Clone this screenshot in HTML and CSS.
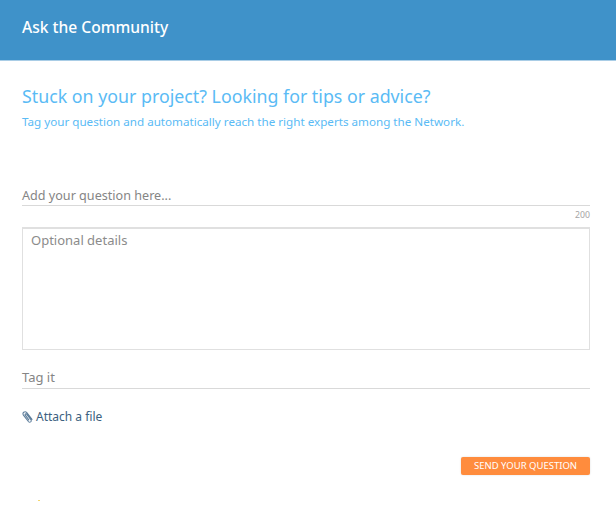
FILE: index.html
```html
<!DOCTYPE html>
<html lang="en">
<head>
<meta charset="utf-8">
<title>Ask the Community</title>
<link rel="stylesheet" href="styles.css">
</head>
<body>
<header class="header"><h1 class="header-title">Ask the Community</h1></header>
<main class="content">
  <h2 class="headline">Stuck on your project? Looking for tips or advice?</h2>
  <p class="subline">Tag your question and automatically reach the right experts among the Network.</p>
  <div class="field question">Add your question here...</div>
  <div class="counter">200</div>
  <div class="details">Optional details</div>
  <div class="field tags">Tag it</div>
  <a class="attach" href="#">
    <svg class="clip" width="11" height="12" viewBox="0 0 11 12" fill="none" stroke="#5f7f9c" stroke-width="1.1" stroke-linecap="round">
      <path d="M10 8.4 4.8 1.6C4 .7 2.7.5 1.7 1.3.8 2 .7 3.2 1.4 4.1l5 6.4c.6.7 1.5.9 2.2.4.7-.6.8-1.5.3-2.2L4.6 3.2c-.3-.4-.8-.5-1.2-.2-.3.3-.4.8-.1 1.2l3.5 4.6"/>
    </svg>
    <span>Attach a file</span>
  </a>
  <div class="actions"><button class="send" type="button">SEND YOUR QUESTION</button></div>
</main>
<i class="speck"></i>
</body>
</html>
```
FILE: styles.css
```css
* { box-sizing: border-box; }
html, body { margin: 0; padding: 0; background: #fff; }
body { position: relative; font-family: "Noto Sans", "Liberation Sans", sans-serif; width: 616px; height: 509px; overflow: hidden; }
.header { height: 61px; background: #3f92c9; border-bottom: 1px solid #a9cde6; padding: 17px 22px 0; }
.header-title { margin: 0; font-size: 15.6px; line-height: 20px; font-weight: 500; color: #fff; }
.content { padding: 0 26px 0 22px; }
.headline { margin: 23px 0 0; font-size: 17.8px; line-height: 24px; font-weight: 400; color: #5abbf5; }
.subline { margin: 6px 0 0; font-size: 11.65px; line-height: 16px; color: #5abbf5; }
.field { font-size: 12.6px; line-height: 18px; color: #858585; border-bottom: 1px solid #d9d9d9; }
.question { margin-top: 56px; height: 20px; padding-top: 1px; }
.counter { margin-top: 4px; font-size: 8.7px; line-height: 10px; color: #a5a5a5; text-align: right; }
.details { margin-top: 7px; height: 123px; border: 1px solid #e0e0e0; border-top-width: 2px; padding: 2px 8px; font-size: 13px; line-height: 18px; color: #8b8b8b; }
.tags { margin-top: 18px; height: 21px; font-size: 13px; }
.attach { display: flex; align-items: center; gap: 3px; margin-top: 19px; font-size: 12px; line-height: 18px; color: #3c5f80; text-decoration: none; }
.actions { display: flex; justify-content: flex-end; margin-top: 31px; }
.send { width: 129px; height: 18px; padding: 0; border: 0; border-radius: 2px; background: #ff8c3d; color: #fff; font: 400 9.5px/18px "Noto Sans", "Liberation Sans", sans-serif; box-shadow: 0 0 2px rgba(0,0,0,.15); }
.speck { position: absolute; left: 38px; top: 500px; width: 2px; height: 1px; background: #f5d76e; }
```
